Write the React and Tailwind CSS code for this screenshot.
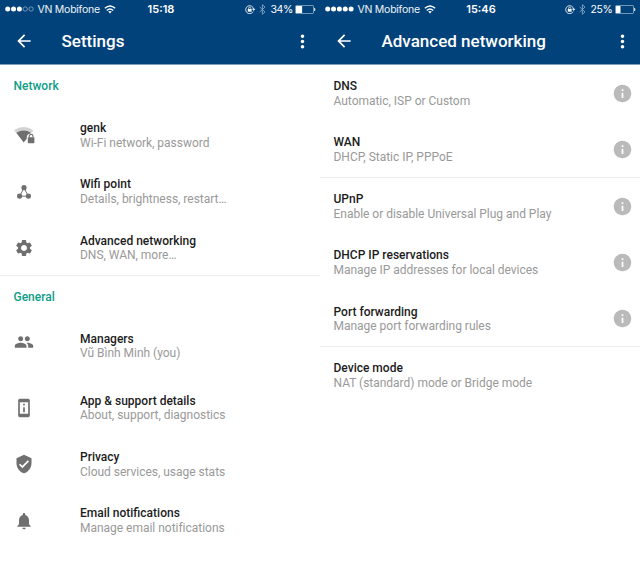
import React from "react";
import {
  MdArrowBack,
  MdMoreVert,
  MdSettings,
  MdPeople,
  MdPermDeviceInformation,
  MdVerifiedUser,
  MdNotifications,
  MdInfo,
} from "react-icons/md";

function WifiLock() {
  return (
    <svg viewBox="0 0 21 18" className="h-[18px] w-[21px]">
      <path d="M0 4.2Q9.7-2.4 19.4 4.2L17 7Q9.7 2.6 2.4 7Z" fill="#d3d3d3" />
      <path d="M2.4 6.8Q9.7 2.2 17 6.8L16.4 7.4Q12.8 8 12.8 10.9V12.7L9.7 16.4 2.4 6.9Z" fill="#6f6f6f" />
      <rect x="13.8" y="11.2" width="6.6" height="6" rx=".8" fill="#6f6f6f" />
      <path d="M15.2 11.5V10.3a1.9 1.9 0 0 1 3.8 0V11.5" fill="none" stroke="#6f6f6f" strokeWidth="1.1" />
    </svg>
  );
}

function Nodes() {
  return (
    <svg viewBox="0 0 14 14" className="h-3.5 w-3.5">
      <path d="M7 2.8 2.7 11.2H11.3Z" fill="none" stroke="#747474" strokeWidth="1" />
      <g fill="#6f6f6f">
        <circle cx="7" cy="2.7" r="2.6" />
        <circle cx="2.6" cy="11.1" r="2.6" />
        <circle cx="11.4" cy="11.1" r="2.6" />
      </g>
    </svg>
  );
}

function Signal({ strength }) {
  return (
    <svg viewBox="0 0 29 6" className="h-1.5 w-[29px] shrink-0">
      {[0, 1, 2, 3, 4].map((i) =>
        i < strength ? (
          <circle key={i} cx={2.7 + i * 5.85} cy="3" r="2.5" fill="#fff" />
        ) : (
          <circle key={i} cx={2.7 + i * 5.85} cy="3" r="2.15" fill="none" stroke="#b9cadb" strokeWidth=".6" />
        )
      )}
    </svg>
  );
}

function Wifi() {
  return (
    <svg viewBox="0 0 12 9" className="h-[9px] w-3" fill="none" stroke="#fff" strokeWidth="1.4">
      <path d="M.8 3.3Q6-1.3 11.2 3.3M2.8 5.5Q6 2.6 9.2 5.5" />
      <path d="M4.2 6.6Q6 5.2 7.8 6.6L6 8.6Z" fill="#fff" stroke="none" />
    </svg>
  );
}

function RotationLock() {
  return (
    <svg viewBox="0 0 11 9" className="h-[9px] w-[11px]">
      <path d="M8.1 6.7A4 4 0 1 1 8.6 4" fill="none" stroke="#e5edf4" strokeWidth=".9" />
      <path d="M7 3.7H10.4L8.7 5.9Z" fill="#e5edf4" />
      <rect x="2.8" y="4" width="3.8" height="2.7" fill="#fff" />
      <path d="M3.6 4.2V3.2a1.1 1.1 0 0 1 2.2 0V4.2" fill="none" stroke="#fff" strokeWidth=".7" />
    </svg>
  );
}

function Bluetooth() {
  return (
    <svg viewBox="0 0 7 11" className="h-[11px] w-[7px]">
      <path d="M.7 3 6 7.9 3.4 10.3V.7L6 3.1.7 8" fill="none" stroke="#7f9fbf" strokeWidth=".95" />
    </svg>
  );
}

function Battery({ level }) {
  return (
    <svg viewBox="0 0 21 9" className="h-[9px] w-[21px]">
      <rect x=".4" y=".4" width="18.2" height="8.2" rx="1.4" fill="none" stroke="#b9cadb" strokeWidth=".7" />
      <rect x="1" y="1" width={level * 0.18} height="7" rx=".6" fill="#fff" />
      <path d="M19.5 3Q20.8 4.5 19.5 6Z" fill="#fff" stroke="#fff" strokeWidth=".5" />
    </svg>
  );
}

function StatusBar({ strength, time, battery }) {
  return (
    <div className="grid h-[18px] grid-cols-[1fr_40px_1fr] items-center pl-[5px] pr-[4px] text-[10.5px] leading-[18px] text-white font-['Inter',sans-serif]">
      <div className="flex items-center">
        <Signal strength={strength} />
        <span className="ml-[3.5px] w-[66.5px] whitespace-nowrap pt-px leading-[17px] tracking-[-0.25px] text-[#eef3f7]">VN Mobifone</span>
        <Wifi />
      </div>
      <span className="pl-px text-center text-[11px] font-semibold">{time}</span>
      <div className="flex items-center justify-end">
        <RotationLock />
        <span className="ml-[3px] mr-[5px]"><Bluetooth /></span>
        <span className="w-[24.5px] whitespace-nowrap pt-px leading-[17px] tracking-[-0.4px]">{battery}%</span>
        <Battery level={battery} />
      </div>
    </div>
  );
}

function Header({ title, ...status }) {
  return (
    <header className="h-[65px] border-b border-[#7b9dbc] bg-[#02427a] text-white">
      <StatusBar {...status} />
      <div className="flex h-[46px] items-center pl-3.5 pr-[7px]">
        <MdArrowBack size={20} />
        <h1 className="ml-[27.5px] flex-1 whitespace-nowrap text-[17px] font-medium leading-5">{title}</h1>
        <MdMoreVert size={21} />
      </div>
    </header>
  );
}

function Label({ title, detail }) {
  return (
    <div className="flex-1 whitespace-nowrap pt-[0.9px]">
      <div className="text-[12px] font-medium leading-[14.6px] text-[#1c1c1c]">{title}</div>
      <div className="text-[12px] leading-[14.6px] tracking-[-0.02px] text-[#999]">{detail}</div>
    </div>
  );
}

function SettingRow({ icon, title, detail, rowClass = "h-[56.4px]", iconClass = "" }) {
  return (
    <div className={"flex items-center pl-3.5 " + rowClass}>
      <div className={"flex w-[66px] text-[#6f6f6f] " + iconClass}>{icon}</div>
      <Label title={title} detail={detail} />
    </div>
  );
}

function InfoRow({ title, detail, info = true }) {
  return (
    <div className="flex h-[56.4px] items-center pl-[13.5px] pr-[7px]">
      <Label title={title} detail={detail} />
      {info && <MdInfo size={21} className="text-[#bababa]" />}
    </div>
  );
}

function SectionTitle({ children }) {
  return <h2 className="flex h-[42px] items-center pl-[13.5px] text-[12px] font-medium text-[#0f9d88]">{children}</h2>;
}

export default function App() {
  return (
    <div className="grid h-[570px] w-[640px] grid-cols-2 overflow-hidden bg-white font-['Roboto',sans-serif]">
      <main>
        <Header title="Settings" strength={3} time="15:18" battery={34} />
        <section className="h-[211px] border-b border-[#ececec]">
          <SectionTitle>Network</SectionTitle>
          <SettingRow icon={<WifiLock />} title="genk" detail="Wi-Fi network, password" />
          <SettingRow icon={<Nodes />} iconClass="pl-[3px]" title="Wifi point" detail="Details, brightness, restart…" />
          <SettingRow icon={<MdSettings size={20} />} title="Advanced networking" detail="DNS, WAN, more…" />
        </section>
        <section>
          <SectionTitle>General</SectionTitle>
          <SettingRow icon={<MdPeople size={20} />} rowClass="h-[61.6px] pb-[5.6px]" iconClass="pb-[8px]" title="Managers" detail="Vũ Bình Minh (you)" />
          <SettingRow icon={<MdPermDeviceInformation size={20} />} title="App & support details" detail="About, support, diagnostics" />
          <SettingRow icon={<MdVerifiedUser size={20} />} title="Privacy" detail="Cloud services, usage stats" />
          <SettingRow icon={<MdNotifications size={20} />} title="Email notifications" detail="Manage email notifications" />
        </section>
      </main>
      <main>
        <Header title="Advanced networking" strength={5} time="15:46" battery={25} />
        <section className="h-[113px] border-b border-[#ececec]">
          <InfoRow title="DNS" detail="Automatic, ISP or Custom" />
          <InfoRow title="WAN" detail="DHCP, Static IP, PPPoE" />
        </section>
        <section className="h-[169px] border-b border-[#ececec]">
          <InfoRow title="UPnP" detail="Enable or disable Universal Plug and Play" />
          <InfoRow title="DHCP IP reservations" detail="Manage IP addresses for local devices" />
          <InfoRow title="Port forwarding" detail="Manage port forwarding rules" />
        </section>
        <section>
          <InfoRow title="Device mode" detail="NAT (standard) mode or Bridge mode" info={false} />
        </section>
      </main>
    </div>
  );
}
